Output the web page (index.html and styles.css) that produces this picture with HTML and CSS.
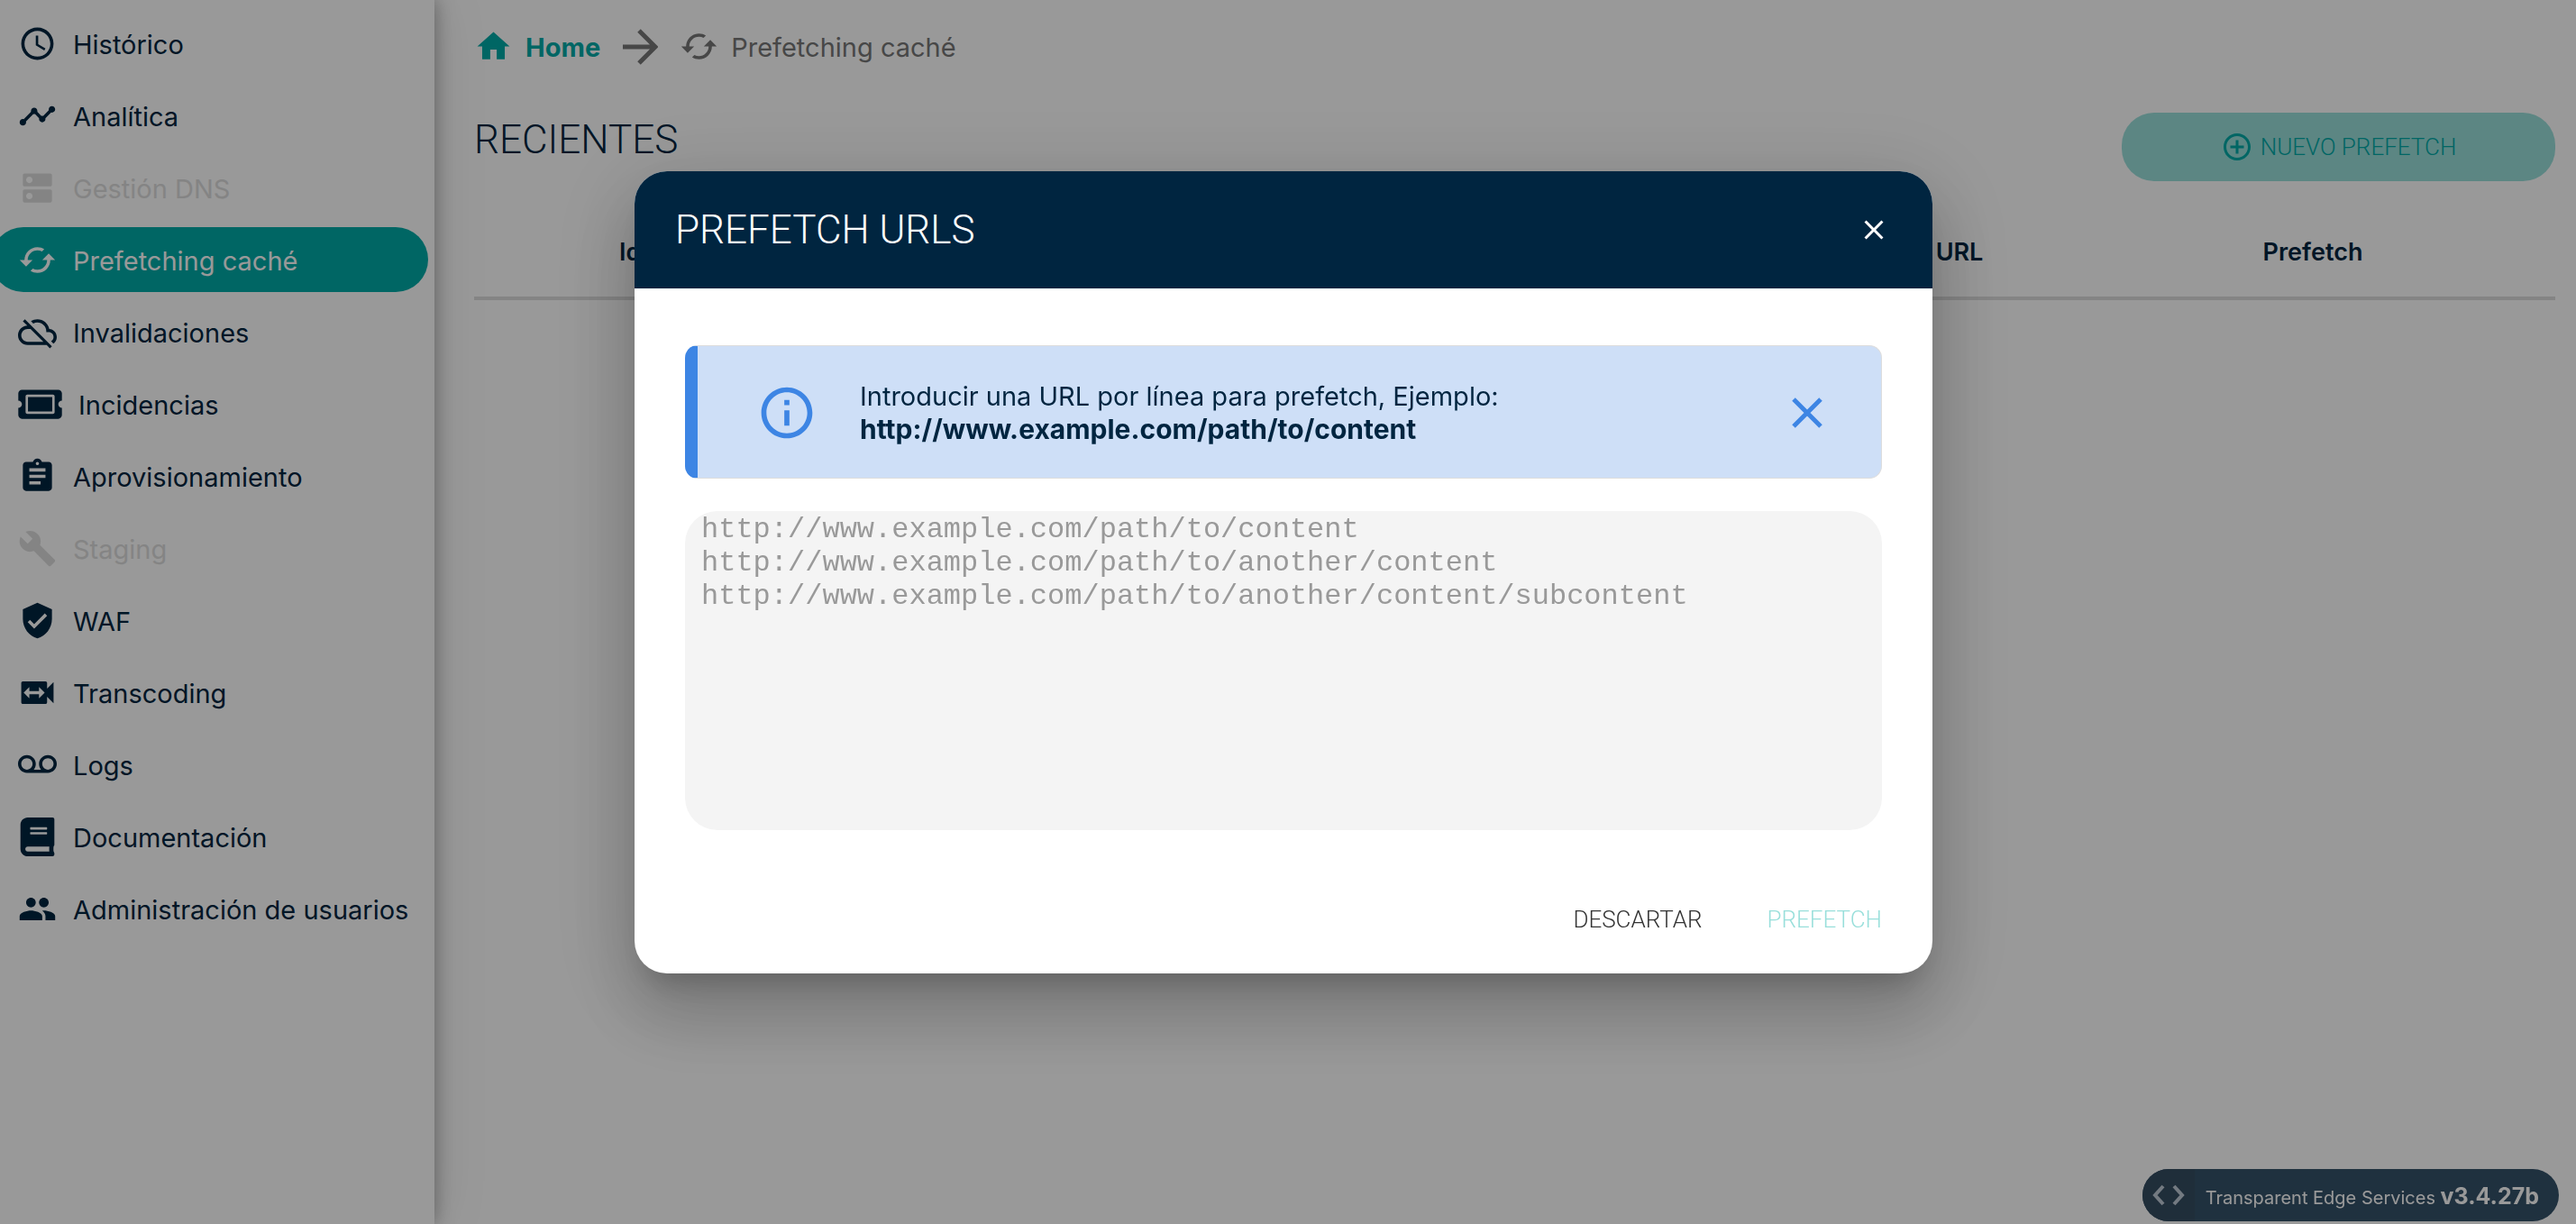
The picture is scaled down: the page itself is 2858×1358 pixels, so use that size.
FILE: index.html
```html
<!DOCTYPE html>
<html lang="es">
<head>
<meta charset="utf-8">
<meta name="viewport" content="width=device-width, initial-scale=1">
<title>Prefetching caché</title>
<link rel="stylesheet" href="styles.css">
</head>
<body>
<svg class="sprite" aria-hidden="true">
  <symbol id="i-sync" viewBox="0 0 24 24"><path d="M19 8l-4 4h3c0 3.310-2.690 6-6 6-1.010 0-1.970-.250-2.800-.700l-1.460 1.460C8.970 19.540 10.430 20 12 20c4.420 0 8-3.580 8-8h3l-4-4zM6 12c0-3.310 2.690-6 6-6 1.010 0 1.970.250 2.800.700l1.460-1.460C15.030 4.460 13.570 4 12 4c-4.420 0-8 3.580-8 8H1l4 4 4-4H6z"/></symbol>
  <symbol id="i-close" viewBox="0 0 24 24"><path d="M19 6.410L17.590 5 12 10.590 6.410 5 5 6.410 10.590 12 5 17.590 6.410 19 12 13.410 17.590 19 19 17.590 13.410 12z"/></symbol>
</svg>

<div class="app">
  <nav class="sidebar" aria-label="Principal">
    <a class="item" href="#historico"><svg class="icon" viewBox="0 0 24 24"><path d="M11.990 2C6.470 2 2 6.480 2 12s4.470 10 9.990 10C17.520 22 22 17.520 22 12S17.520 2 11.990 2zM12 20c-4.420 0-8-3.580-8-8s3.580-8 8-8 8 3.580 8 8-3.580 8-8 8zm.500-13H11v6l5.250 3.150.750-1.230-4.500-2.670z"/></svg><span>Histórico</span></a>
    <a class="item" href="#analitica"><svg class="icon" viewBox="0 0 24 24"><path d="M23 8c0 1.100-.900 2-2 2-.180 0-.350-.020-.510-.070l-3.560 3.550c.050.160.070.340.070.520 0 1.100-.900 2-2 2s-2-.900-2-2c0-.180.020-.360.070-.520l-2.550-2.550c-.160.050-.340.070-.520.070s-.360-.020-.520-.070l-4.550 4.560c.050.160.070.330.070.510 0 1.100-.900 2-2 2s-2-.900-2-2 .900-2 2-2c.180 0 .350.020.510.070l4.560-4.550C8.020 9.360 8 9.180 8 9c0-1.100.900-2 2-2s2 .900 2 2c0 .180-.020.360-.070.520l2.550 2.550c.160-.050.340-.070.520-.070s.360.020.520.070l3.550-3.560C19.020 8.350 19 8.180 19 8c0-1.100.900-2 2-2s2 .900 2 2z"/></svg><span>Analítica</span></a>
    <a class="item disabled" aria-disabled="true" href="#dns"><svg class="icon" viewBox="0 0 24 24"><path d="M20 13H4c-.550 0-1 .450-1 1v6c0 .550.450 1 1 1h16c.550 0 1-.450 1-1v-6c0-.550-.450-1-1-1zM7 19c-1.100 0-2-.900-2-2s.900-2 2-2 2 .900 2 2-.900 2-2 2zM20 3H4c-.550 0-1 .450-1 1v6c0 .550.450 1 1 1h16c.550 0 1-.450 1-1V4c0-.550-.450-1-1-1zM7 9c-1.100 0-2-.900-2-2s.900-2 2-2 2 .900 2 2-.900 2-2 2z"/></svg><span>Gestión DNS</span></a>
    <a class="item active" aria-current="page" href="#prefetching"><svg class="icon"><use href="#i-sync"/></svg><span>Prefetching caché</span></a>
    <a class="item" href="#invalidaciones"><svg class="icon" viewBox="0 0 24 24"><path d="M19.350 10.040C18.670 6.590 15.640 4 12 4c-1.480 0-2.850.430-4.010 1.170l1.460 1.460C10.210 6.230 11.080 6 12 6c3.040 0 5.500 2.460 5.500 5.500v.500H19c1.660 0 3 1.340 3 3 0 1.130-.640 2.110-1.560 2.620l1.450 1.450C23.160 18.160 24 16.680 24 15c0-2.640-2.050-4.780-4.650-4.960zM3 5.270l2.750 2.740C2.560 8.150 0 10.770 0 14c0 3.310 2.690 6 6 6h11.730l2 2L21 20.730 4.270 4 3 5.270zM7.730 10l8 8H6c-2.210 0-4-1.790-4-4s1.790-4 4-4h1.730z"/></svg><span>Invalidaciones</span></a>
    <a class="item" href="#incidencias"><svg class="icon icon-wide" viewBox="0 0 576 512"><path d="M128 160h320v192H128V160zm400 96c0 26.510 21.490 48 48 48v96c0 26.510-21.490 48-48 48H48c-26.510 0-48-21.490-48-48v-96c26.510 0 48-21.490 48-48s-21.490-48-48-48v-96c0-26.510 21.490-48 48-48h480c26.510 0 48 21.490 48 48v96c-26.510 0-48 21.490-48 48zm-48-104c0-13.255-10.745-24-24-24H120c-13.255 0-24 10.745-24 24v208c0 13.255 10.745 24 24 24h336c13.255 0 24-10.745 24-24V152z"/></svg><span>Incidencias</span></a>
    <a class="item" href="#aprovisionamiento"><svg class="icon" viewBox="0 0 24 24"><path d="M19 3h-4.180C14.400 1.840 13.300 1 12 1c-1.300 0-2.400.840-2.820 2H5c-1.100 0-2 .900-2 2v14c0 1.100.900 2 2 2h14c1.100 0 2-.900 2-2V5c0-1.100-.900-2-2-2zm-7 0c.550 0 1 .450 1 1s-.450 1-1 1-1-.450-1-1 .450-1 1-1zm2 14H7v-2h7v2zm3-4H7v-2h10v2zm0-4H7V7h10v2z"/></svg><span>Aprovisionamiento</span></a>
    <a class="item disabled" aria-disabled="true" href="#staging"><svg class="icon" viewBox="0 0 24 24"><path d="M22.700 19l-9.100-9.100c.900-2.300.400-5-1.500-6.900-2-2-5-2.400-7.400-1.300L9 6 6 9 1.600 4.700C.400 7.100.900 10.100 2.900 12.100c1.900 1.900 4.600 2.400 6.900 1.500l9.100 9.100c.400.400 1 .400 1.400 0l2.300-2.300c.500-.400.500-1.100.100-1.400z"/></svg><span>Staging</span></a>
    <a class="item" href="#waf"><svg class="icon" viewBox="0 0 24 24"><path d="M12 1L3 5v6c0 5.550 3.840 10.740 9 12 5.160-1.260 9-6.450 9-12V5l-9-4zm-2 16l-4-4 1.410-1.410L10 14.170l6.590-6.590L18 9l-8 8z"/></svg><span>WAF</span></a>
    <a class="item" href="#transcoding"><svg class="icon" viewBox="0 0 24 24"><path d="M18 9.500V6c0-.550-.450-1-1-1H3c-.550 0-1 .450-1 1v12c0 .550.450 1 1 1h14c.550 0 1-.450 1-1v-3.500l4 4v-13l-4 4zm-5 6V13H7v2.500L3.500 12 7 8.500V11h6V8.500l3.500 3.500-3.500 3.500z"/></svg><span>Transcoding</span></a>
    <a class="item" href="#logs"><svg class="icon" viewBox="0 0 24 24"><path d="M18.500 6C15.460 6 13 8.460 13 11.500c0 1.330.470 2.550 1.260 3.500H9.740c.790-.950 1.260-2.170 1.260-3.500C11 8.460 8.540 6 5.500 6S0 8.460 0 11.500 2.460 17 5.500 17h13c3.040 0 5.500-2.460 5.500-5.500S21.540 6 18.500 6zm-13 9C3.570 15 2 13.430 2 11.500S3.570 8 5.500 8 9 9.570 9 11.500 7.430 15 5.500 15zm13 0c-1.930 0-3.500-1.570-3.500-3.500S16.570 8 18.500 8 22 9.570 22 11.500 20.430 15 18.500 15z"/></svg><span>Logs</span></a>
    <a class="item" href="#documentacion"><svg class="icon" viewBox="0 0 448 512"><path d="M448 360V24c0-13.300-10.700-24-24-24H96C43 0 0 43 0 96v320c0 53 43 96 96 96h328c13.300 0 24-10.700 24-24v-16c0-7.500-3.500-14.300-8.900-18.700-4.200-15.400-4.200-59.300 0-74.700 5.400-4.300 8.900-11.100 8.900-18.600zM128 134c0-3.300 2.700-6 6-6h212c3.300 0 6 2.700 6 6v20c0 3.300-2.700 6-6 6H134c-3.300 0-6-2.700-6-6v-20zm0 64c0-3.300 2.700-6 6-6h212c3.300 0 6 2.700 6 6v20c0 3.300-2.700 6-6 6H134c-3.300 0-6-2.700-6-6v-20zm253.400 250H96c-17.700 0-32-14.300-32-32 0-17.600 14.400-32 32-32h285.400c-1.900 17.100-1.900 46.900 0 64z"/></svg><span>Documentación</span></a>
    <a class="item" href="#usuarios"><svg class="icon" viewBox="0 0 24 24"><path d="M16 11c1.660 0 2.990-1.340 2.990-3S17.660 5 16 5c-1.660 0-3 1.340-3 3s1.340 3 3 3zm-8 0c1.660 0 2.990-1.340 2.990-3S9.660 5 8 5C6.340 5 5 6.340 5 8s1.340 3 3 3zm0 2c-2.330 0-7 1.170-7 3.500V19h14v-2.500c0-2.330-4.670-3.500-7-3.500zm8 0c-.290 0-.620.020-.970.050 1.160.840 1.970 1.970 1.970 3.450V19h6v-2.500c0-2.330-4.670-3.500-7-3.500z"/></svg><span>Administración de usuarios</span></a>
  </nav>

  <main class="content">
    <nav class="breadcrumb" aria-label="Ruta">
      <a class="crumb crumb-home" href="#home"><svg class="icon" viewBox="0 0 24 24"><path d="M10 20v-6h4v6h5v-8h3L12 3 2 12h3v8z"/></svg><span>Home</span></a>
      <svg class="crumb-arrow" viewBox="0 0 40 40"><path d="M1 20h36M19 2l18 18-18 18" fill="none" stroke="currentColor" stroke-width="5"/></svg>
      <span class="crumb"><svg class="icon"><use href="#i-sync"/></svg><span>Prefetching caché</span></span>
    </nav>
    <header class="toolbar">
      <h1 class="title">RECIENTES</h1>
      <button class="new-button" type="button"><svg class="icon-small" viewBox="0 0 24 24"><path d="M13 7h-2v4H7v2h4v4h2v-4h4v-2h-4V7zm-1-5C6.480 2 2 6.480 2 12s4.480 10 10 10 10-4.480 10-10S17.520 2 12 2zm0 18c-4.410 0-8-3.590-8-8s3.590-8 8-8 8 3.590 8 8-3.590 8-8 8z"/></svg>NUEVO PREFETCH</button>
    </header>
    <table class="table">
      <colgroup><col class="col-id"><col><col class="col-url"><col class="col-prefetch"></colgroup>
      <thead><tr><th scope="col">Id</th><td></td><th scope="col">URL</th><th scope="col">Prefetch</th></tr></thead>
    </table>
  </main>
</div>

<footer class="version">
  <span class="version-icon"><svg class="icon-small" viewBox="0 0 36 24"><path d="M12 2L3 12l9 10M24 2l9 10-9 10" fill="none" stroke="currentColor" stroke-width="4"/></svg></span>
  <span class="version-text">Transparent Edge Services <strong>v3.4.27b</strong></span>
</footer>

<div class="overlay">
  <section class="dialog" role="dialog" aria-modal="true" aria-labelledby="dialog-title">
    <header class="dialog-header">
      <h2 class="title" id="dialog-title">PREFETCH URLS</h2>
      <button class="icon-button" type="button" aria-label="Cerrar"><svg class="icon-small" viewBox="0 0 24 24"><use href="#i-close"/></svg></button>
    </header>
    <div class="dialog-body">
      <div class="banner">
        <svg class="banner-icon" viewBox="0 0 24 24"><path d="M11 7h2v2h-2zm0 4h2v6h-2zm1-9C6.480 2 2 6.480 2 12s4.480 10 10 10 10-4.480 10-10S17.520 2 12 2zm0 18c-4.410 0-8-3.590-8-8s3.590-8 8-8 8 3.590 8 8-3.590 8-8 8z"/></svg>
        <p class="banner-text">Introducir una URL por línea para prefetch, Ejemplo:<br><strong>http://www.example.com/path/to/content</strong></p>
        <button class="icon-button" type="button" aria-label="Ocultar aviso"><svg class="banner-close" viewBox="0 0 34 34"><path d="M2 2l30 30M32 2L2 32" fill="none" stroke="currentColor" stroke-width="5"/></svg></button>
      </div>
      <textarea class="urls" aria-label="URLs" placeholder="http://www.example.com/path/to/content
http://www.example.com/path/to/another/content
http://www.example.com/path/to/another/content/subcontent"></textarea>
    </div>
    <footer class="dialog-actions">
      <button class="text-button" type="button">DESCARTAR</button>
      <button class="text-button primary" type="button" disabled>PREFETCH</button>
    </footer>
  </section>
</div>
</body>
</html>
```
FILE: styles.css
```css
:root {
  --navy: #002540;
  --teal: #00aaa7;
  --teal-light: #99dfdb;
  --blue: #3d85e4;
  --body-font: Inter, "Liberation Sans", sans-serif;
  --caps-font: Roboto, "Liberation Sans", sans-serif;
}

* { box-sizing: border-box; }

body {
  margin: 0;
  background: #fff;
  color: var(--navy);
  font: 400 29px/36px var(--body-font);
}

h1, h2, p { margin: 0; }
a { color: inherit; text-decoration: none; }
svg { fill: currentColor; flex: none; }
button { border: 0; padding: 0; background: none; color: inherit; cursor: pointer; }

.sprite { display: none; }
.icon { width: 43px; height: 43px; }
.icon-wide { width: 49px; }
.icon-small { width: 36px; height: 36px; }

.app { display: flex; min-height: 100vh; }

.sidebar {
  display: flex;
  flex: 0 0 482px;
  flex-direction: column;
  gap: 8px;
  padding: 12px 7px 12px 0;
  box-shadow: 0 0 20px rgba(0, 0, 0, .35), 0 0 60px rgba(0, 0, 0, .1);
}

.item {
  display: flex;
  align-items: center;
  gap: 18px;
  height: 72px;
  margin-left: -10px;
  padding-left: 30px;
  border-radius: 36px;
}
.item span, .crumb span { padding-top: 3px; }
.item.active { background: var(--teal); color: #fff; }
.item.disabled { color: #ddd; }

.content { flex: 1; min-width: 0; padding: 30px 23px 30px 44px; }

.breadcrumb { display: flex; align-items: center; gap: 24px; height: 43px; color: #777; }
.crumb { display: flex; align-items: center; gap: 14px; }
.crumb-home { color: var(--teal); font-weight: 700; }
.crumb-arrow { width: 40px; height: 40px; }

.toolbar { display: flex; align-items: flex-start; justify-content: space-between; padding-top: 52px; }
.title { font: 300 44px/60px var(--caps-font); }
.new-button {
  display: flex;
  align-items: center;
  justify-content: center;
  gap: 8px;
  width: 481px;
  height: 76px;
  border-radius: 36px;
  background: var(--teal-light);
  color: var(--teal);
  font: 300 26px/36px var(--caps-font);
}

.table { width: 100%; margin-top: 30px; border-collapse: collapse; table-layout: fixed; }
.table th, .table td { height: 100px; padding: 0; border-bottom: 4px solid #ddd; font-size: 27px; font-weight: 600; }
.col-id { width: 15%; }
.col-url { width: 246px; }
.col-prefetch { width: 538px; }

.version {
  position: fixed;
  right: 19px;
  bottom: 3px;
  display: flex;
  height: 58px;
  overflow: hidden;
  border-radius: 29px;
  background: #355269;
  color: #fff;
  font-size: 20px;
}
.version-icon { display: flex; align-items: center; padding: 0 11px; background: #354d62; color: #c0ccd8; }
.version-text { padding: 12px 22px 0 12px; }
.version strong { font-size: 25px; }

.overlay {
  position: fixed;
  inset: 0;
  display: flex;
  align-items: center;
  justify-content: center;
  padding: 0 10px 88px 0;
  background: rgba(0, 0, 0, .4);
}
.dialog {
  width: 100%;
  max-width: 1440px;
  overflow: hidden;
  border-radius: 36px;
  background: #fff;
  box-shadow: 0 22px 30px -14px rgba(0, 0, 0, .2), 0 48px 76px 6px rgba(0, 0, 0, .14), 0 18px 92px 16px rgba(0, 0, 0, .12);
}
.dialog-header {
  display: flex;
  align-items: center;
  justify-content: space-between;
  height: 130px;
  padding: 0 47px 0 45px;
  background: var(--navy);
  color: #fff;
}
.icon-button { display: flex; }

.dialog-body { display: flex; flex-direction: column; gap: 36px; padding: 63px 56px 0; }
.banner {
  display: flex;
  align-items: center;
  height: 148px;
  padding: 2px 65px 0;
  border: 1px solid #ddd;
  border-left: 14px solid var(--blue);
  border-radius: 14px;
  background: #cedff7;
  color: var(--blue);
}
.banner-icon { width: 68px; height: 68px; }
.banner-text { flex: 1; padding-left: 47px; color: var(--navy); }
.banner-text strong { font-size: 30px; }
.banner-close { width: 34px; height: 34px; }

.urls {
  width: 100%;
  height: 354px;
  padding: 2px 18px;
  border: 0;
  border-radius: 36px;
  background: #f4f4f4;
  font: 400 32px/37px "Liberation Mono", monospace;
  resize: none;
}
.urls::placeholder { color: #999; }

.dialog-actions { display: flex; justify-content: flex-end; gap: 72px; padding: 81px 56px 42px; }
.text-button { color: #333; font: 300 26px/36px var(--caps-font); }
.text-button.primary { color: var(--teal-light); }
```
